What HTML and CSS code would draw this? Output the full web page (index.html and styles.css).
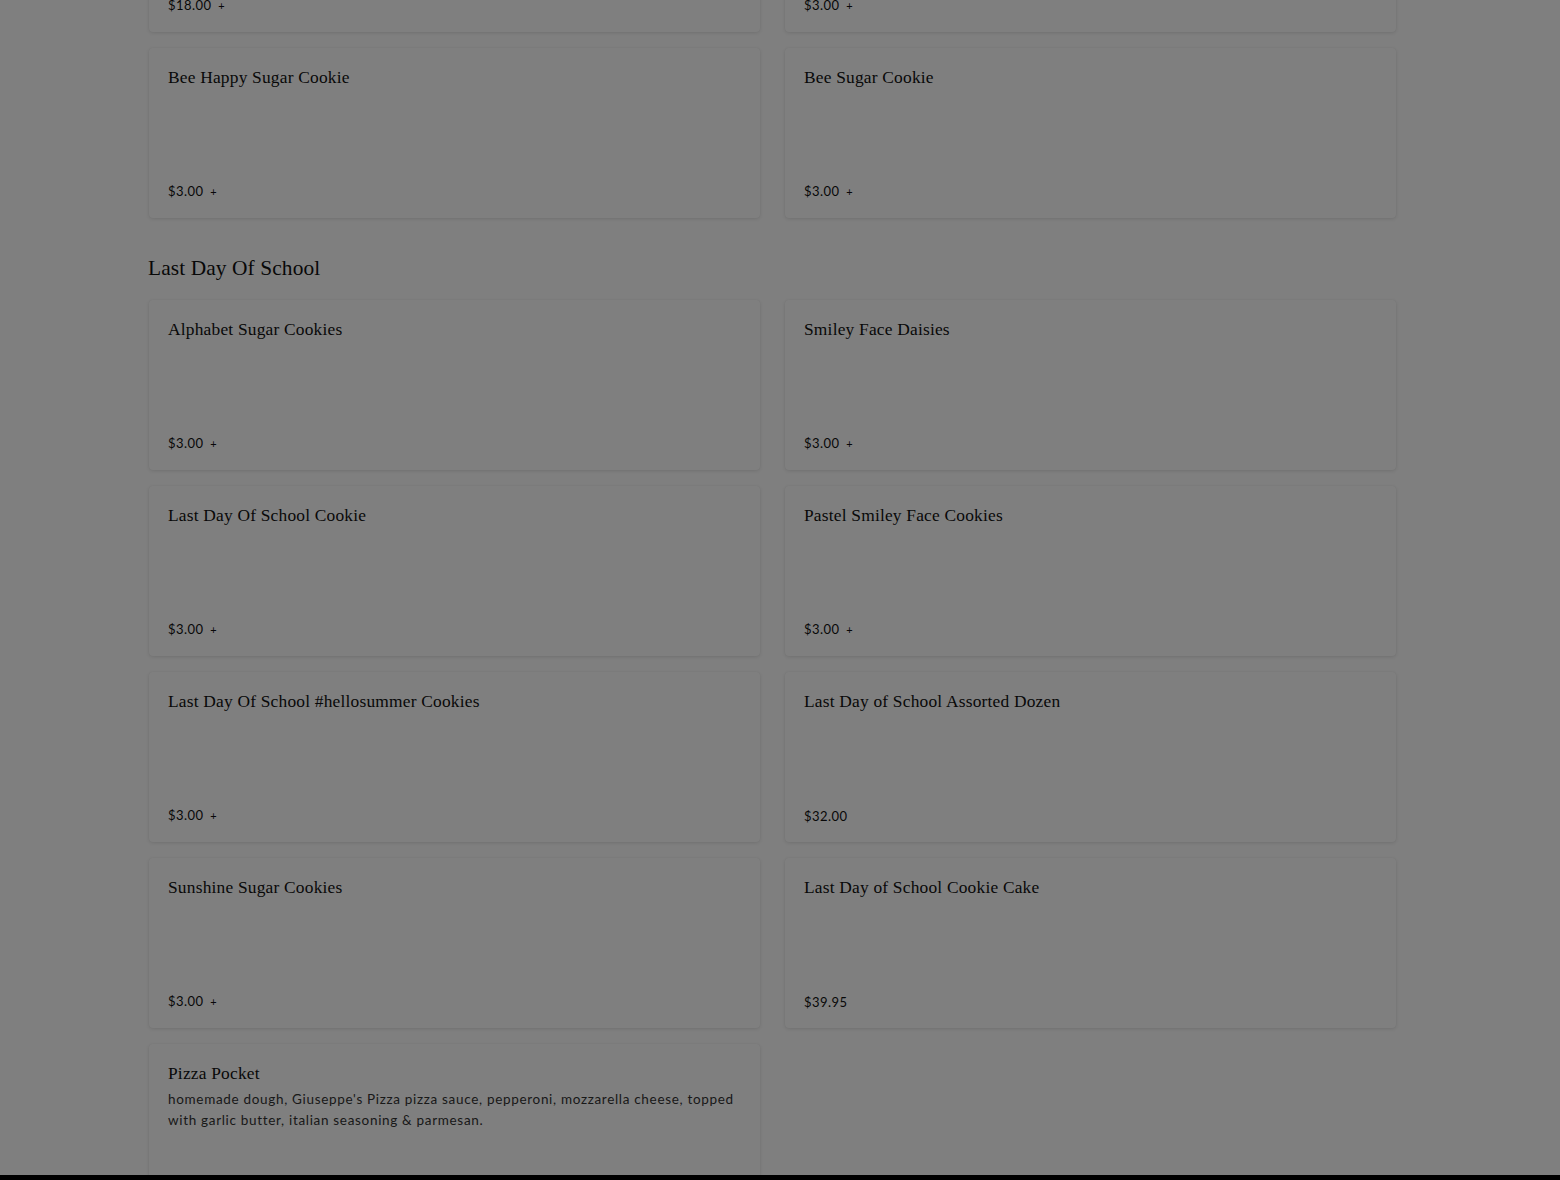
FILE: index.html
```html
<!DOCTYPE html>
<html lang="en">
<head>
<meta charset="utf-8">
<title>Menu</title>
<link rel="stylesheet" href="styles.css">
</head>
<body>
<main class="menu">
  <section class="category category-partial">
    <div class="grid">
      <article class="card">
        <h3 class="item-name">Bee Sugar Cookie Dozen</h3>
        <div class="price">$18.00 <span class="plus">+</span></div>
      </article>
      <article class="card">
        <h3 class="item-name">Honey Bee Cookie</h3>
        <div class="price">$3.00 <span class="plus">+</span></div>
      </article>
      <article class="card">
        <h3 class="item-name">Bee Happy Sugar Cookie</h3>
        <div class="price">$3.00 <span class="plus">+</span></div>
      </article>
      <article class="card">
        <h3 class="item-name">Bee Sugar Cookie</h3>
        <div class="price">$3.00 <span class="plus">+</span></div>
      </article>
    </div>
  </section>

  <section class="category">
    <h2 class="category-title">Last Day Of School</h2>
    <div class="grid">
      <article class="card">
        <h3 class="item-name">Alphabet Sugar Cookies</h3>
        <div class="price">$3.00 <span class="plus">+</span></div>
      </article>
      <article class="card">
        <h3 class="item-name">Smiley Face Daisies</h3>
        <div class="price">$3.00 <span class="plus">+</span></div>
      </article>
      <article class="card">
        <h3 class="item-name">Last Day Of School Cookie</h3>
        <div class="price">$3.00 <span class="plus">+</span></div>
      </article>
      <article class="card">
        <h3 class="item-name">Pastel Smiley Face Cookies</h3>
        <div class="price">$3.00 <span class="plus">+</span></div>
      </article>
      <article class="card">
        <h3 class="item-name">Last Day Of School #hellosummer Cookies</h3>
        <div class="price">$3.00 <span class="plus">+</span></div>
      </article>
      <article class="card">
        <h3 class="item-name">Last Day of School Assorted Dozen</h3>
        <div class="price">$32.00</div>
      </article>
      <article class="card">
        <h3 class="item-name">Sunshine Sugar Cookies</h3>
        <div class="price">$3.00 <span class="plus">+</span></div>
      </article>
      <article class="card">
        <h3 class="item-name">Last Day of School Cookie Cake</h3>
        <div class="price">$39.95</div>
      </article>
      <article class="card">
        <h3 class="item-name">Pizza Pocket</h3>
        <p class="desc">homemade dough, Giuseppe's Pizza pizza sauce, pepperoni, mozzarella cheese, topped with garlic butter, italian seasoning &amp; parmesan.</p>
      </article>
    </div>
  </section>
</main>
<div class="backdrop"></div>
<div class="sheet-edge"></div>
</body>
</html>
```

FILE: styles.css
```css
html, body {
  margin: 0;
  padding: 0;
  background: #ffffff;
  height: 1180px;
  overflow: hidden;
}

body {
  font-family: "Liberation Serif", "DejaVu Serif", serif;
  color: #222;
}

.menu {
  width: 1249px;
  margin: -138px 0 0 148px;
}

.category-title {
  font-family: "Liberation Serif", serif;
  font-weight: 400;
  font-size: 21.4px;
  line-height: 30px;
  margin: 35px 0 17px 0;
  color: #111;
  letter-spacing: 0.1px;
}

.grid {
  display: grid;
  grid-template-columns: 611px 611px;
  column-gap: 25px;
  row-gap: 16px;
  padding-left: 1px;
}

.card {
  box-sizing: border-box;
  min-height: 170px;
  padding: 20px 20px 19px 19px;
  background: #fff;
  border-radius: 4px;
  box-shadow: 0 1px 4px rgba(0, 0, 0, 0.12), 0 0 1px rgba(0, 0, 0, 0.08);
  display: flex;
  flex-direction: column;
}

.item-name {
  font-family: "Liberation Serif", serif;
  font-weight: 400;
  font-size: 17.4px;
  line-height: 18px;
  margin: 0;
  color: #111;
  letter-spacing: 0.2px;
}

.desc {
  font-family: "Lato", "Open Sans", sans-serif;
  font-size: 13.5px;
  line-height: 21px;
  margin: 7px 0 0 0;
  color: #333;
  letter-spacing: 0.68px;
  max-width: 570px;
}

.price {
  margin-top: auto;
  font-family: "Lato", "Open Sans", sans-serif;
  font-size: 13px;
  line-height: 14px;
  color: #111;
  letter-spacing: 0.45px;
}

.plus {
  font-size: 11px;
  margin-left: 3px;
}

.backdrop {
  position: fixed;
  inset: 0;
  background: rgba(0, 0, 0, 0.5);
}

.sheet-edge {
  position: fixed;
  left: 0;
  right: 0;
  bottom: 0;
  height: 5px;
  background: #000;
}
```
